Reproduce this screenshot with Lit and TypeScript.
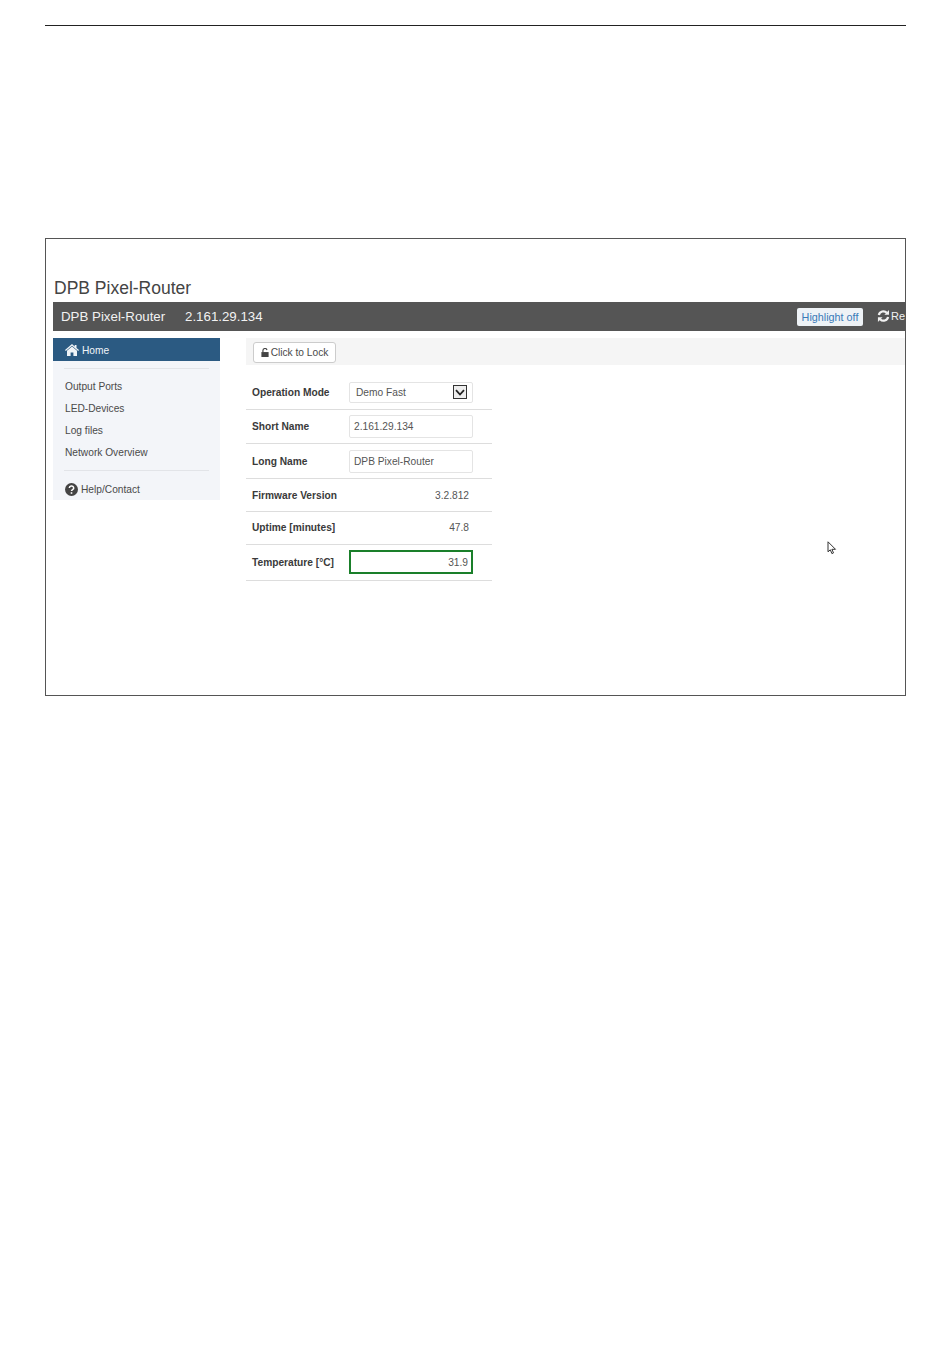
import { LitElement, html, css } from "lit";
import { customElement } from "lit/decorators.js";

@customElement("app-root")
export class AppRoot extends LitElement {
  static styles = css`
    :host { display: block; width: 950px; height: 1369px; background: #fff; font-family: "Liberation Sans", Arial, sans-serif; color: #333; overflow: hidden; }
    .page { padding: 25px 44px 0 45px; }
    .rule { height: 1px; background: #222; }
    .frame { margin-top: 212px; height: 456px; border: 1px solid #555; padding-left: 7px; overflow: hidden; }
    .title { margin: 38px 0 0 1px; height: 25px; font-size: 17.5px; line-height: 22px; font-weight: 400; color: #444; }
    .nav { height: 29px; background: #555; color: #f2f2f2; display: flex; align-items: center; padding: 0 0 1px 8px; box-sizing: border-box; font-size: 13.3px; white-space: nowrap; overflow: hidden; }
    .brand { width: 124px; }
    .ip { flex: 1; }
    .hl { width: 66px; height: 18px; background: #eef2f6; border-radius: 2px; color: #3a7ab8; font-size: 10.8px; display: flex; align-items: center; justify-content: center; margin-top: 2px; }
    .reload { width: 28px; margin-left: 14px; display: flex; align-items: center; gap: 1px; font-size: 11px; overflow: hidden; flex: none; }
    .main { display: flex; margin-top: 7px; align-items: flex-start; }
    .side { width: 167px; height: 162px; background: #f3f5f9; font-size: 10.2px; flex: none; color: #4a4a4a; }
    .home { height: 23px; box-sizing: border-box; padding: 1px 0 0 12px; background: #2b5a82; color: #f0f4f8; display: flex; align-items: center; gap: 3px; }
    .sep { height: 1px; background: #e2e4e8; margin: 7px 11px 0 11px; }
    .links { display: flex; flex-direction: column; padding: 7px 0 0 12px; }
    .links span { height: 22px; line-height: 22px; }
    .sep2 { margin-top: 6px; }
    .help { display: flex; align-items: center; gap: 3px; padding: 12px 0 0 12px; }
    .content { margin-left: 26px; flex: 1; }
    .toolbar { height: 27px; background: #f5f5f5; padding: 4px 0 0 7px; box-sizing: border-box; }
    .btn { width: 83px; height: 21px; box-sizing: border-box; background: #fff; border: 1px solid #ccc; border-radius: 3px; font-size: 10.2px; color: #4a4a4a; display: flex; align-items: center; justify-content: center; gap: 2px; padding-bottom: 1px; }
    .table { width: 246px; margin-top: 11px; font-size: 10.2px; }
    .row { display: flex; align-items: center; border-bottom: 1px solid #ddd; box-sizing: border-box; padding-left: 6px; }
    .lift { padding-bottom: 1px; }
    .label { width: 97px; font-weight: 700; color: #3a3a3a; flex: none; white-space: nowrap; }
    .field { width: 124px; box-sizing: border-box; border: 1px solid #e4e4e4; border-radius: 2px; display: flex; align-items: center; padding: 0 4px; color: #555; }
    .select { height: 21px; justify-content: space-between; padding: 0 5px 0 6px; margin-bottom: 1px; }
    .arrow { width: 14px; height: 14px; box-sizing: border-box; border: 1px solid #333; background: #eee; display: flex; align-items: center; justify-content: center; }
    .text { height: 23px; }
    .value { width: 217px; margin-left: -97px; text-align: right; color: #555; box-sizing: border-box; padding-left: 97px; }
    .temp { height: 24px; border: 2px solid #1a7f2a; border-radius: 0; justify-content: flex-end; padding-right: 3px; margin-bottom: 1px; }
    .cursor { position: absolute; left: 827px; top: 541px; }
    .h34 { height: 34px; } .h35 { height: 35px; } .h33 { height: 33px; } .h36 { height: 36px; }
  `;

  render() {
    return html`
      <div class="page">
        <div class="rule"></div>
        <div class="frame">
          <div class="title">DPB Pixel-Router</div>
          <div class="nav">
            <span class="brand">DPB Pixel-Router</span>
            <span class="ip">2.161.29.134</span>
            <span class="hl">Highlight off</span>
            <span class="reload">
              <svg width="16" height="16" viewBox="0 0 14 14" fill="none" stroke="#f2f2f2" stroke-width="2.400">
                <path d="M2 6a5 5 0 0 1 8.600-2.400"/><path d="M12 8a5 5 0 0 1-8.600 2.400"/>
                <path d="M13 .600v5H8z" fill="#f2f2f2" stroke="none"/><path d="M1 13.400v-5h5z" fill="#f2f2f2" stroke="none"/>
              </svg>Re
            </span>
          </div>
          <div class="main">
            <div class="side">
              <div class="home">
                <svg width="14" height="12" viewBox="0 0 14 12" fill="#f0f4f8"><path d="M7 0 0 6l.8 1L7 1.800 13.200 7l.8-1-2.500-2.100V1h-1.800v1.400z"/><path d="M2 6.800V12h3.600V8.600h2.800V12H12V6.800L7 2.600z"/></svg>
                Home
              </div>
              <div class="sep"></div>
              <div class="links">
                <span>Output Ports</span>
                <span>LED-Devices</span>
                <span>Log files</span>
                <span>Network Overview</span>
              </div>
              <div class="sep sep2"></div>
              <div class="help">
                <svg width="13" height="13" viewBox="0 0 13 13"><circle cx="6.500" cy="6.500" r="6.500" fill="#444"/><path d="M4.300 5a2.200 2 0 1 1 3.300 1.700c-.7.4-1.100.7-1.100 1.400" fill="none" stroke="#fff" stroke-width="1.500"/><rect x="5.700" y="9.200" width="1.600" height="1.600" fill="#fff"/></svg>
                Help/Contact
              </div>
            </div>
            <div class="content">
              <div class="toolbar">
                <div class="btn">
                  <svg width="8" height="9" viewBox="0 0 8 10" fill="#444"><path d="M0 4.500h8V10H0z"/><path d="M1.700 4.500V2.800a2.300 2.300 0 0 1 4.500-.6" fill="none" stroke="#444" stroke-width="1.300"/></svg>
                  Click to Lock
                </div>
              </div>
              <div class="table">
                <div class="row h34">
                  <span class="label">Operation Mode</span>
                  <span class="field select">Demo Fast
                    <span class="arrow"><svg width="10" height="7" viewBox="0 0 10 7" fill="none" stroke="#222" stroke-width="1.800"><path d="M1 1.200 5 5.500l4-4.300"/></svg></span>
                  </span>
                </div>
                <div class="row h34"><span class="label">Short Name</span><span class="field text">2.161.29.134</span></div>
                <div class="row h35"><span class="label">Long Name</span><span class="field text">DPB Pixel-Router</span></div>
                <div class="row h33"><span class="label">Firmware Version</span><span class="value">3.2.812</span></div>
                <div class="row h33 lift"><span class="label">Uptime [minutes]</span><span class="value">47.8</span></div>
                <div class="row h36"><span class="label">Temperature [°C]</span><span class="field temp">31.9</span></div>
              </div>
            </div>
          </div>
        </div>
      </div>
      <svg class="cursor" width="10" height="14" viewBox="0 0 10 14" fill="#fff" stroke="#333" stroke-width="1"><path d="M1 .8v10l2.300-2 1.600 3.800 1.600-.7-1.600-3.600H8.500z"/></svg>
    `;
  }
}
